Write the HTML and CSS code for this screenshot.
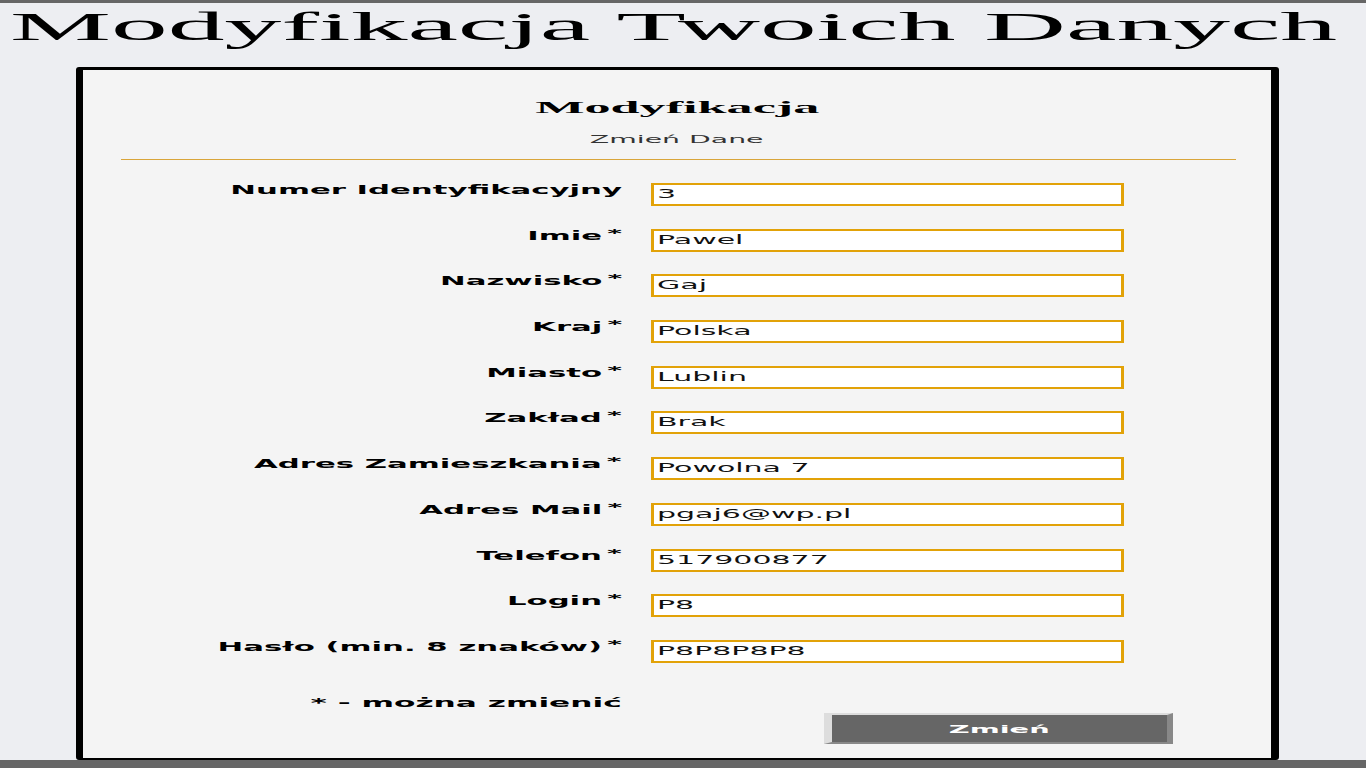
FILE: index.html
```html
<!DOCTYPE html>
<html lang="pl">
<head>
<meta charset="utf-8">
<title>Modyfikacja Twoich Danych</title>
<link rel="stylesheet" href="styles.css">
</head>
<body>
<div class="topbar"></div>
<h1 class="page-title"><span class="st st-title">Modyfikacja Twoich Danych</span></h1>
<main class="card">
  <h2 class="card-title"><span class="st st-head">Modyfikacja</span></h2>
  <p class="card-sub"><span class="st st-sub">Zmień Dane</span></p>
  <hr class="rule">
  <form class="form">
    <div class="lbl"><span class="st st-lbl">Numer Identyfikacyjny</span></div>
    <div class="field"><span class="st st-val">3</span></div>

    <div class="lbl"><span class="st st-lbl">Imie<sup class="ast">*</sup></span></div>
    <div class="field"><span class="st st-val">Pawel</span></div>

    <div class="lbl"><span class="st st-lbl">Nazwisko<sup class="ast">*</sup></span></div>
    <div class="field"><span class="st st-val">Gaj</span></div>

    <div class="lbl"><span class="st st-lbl">Kraj<sup class="ast">*</sup></span></div>
    <div class="field"><span class="st st-val">Polska</span></div>

    <div class="lbl"><span class="st st-lbl">Miasto<sup class="ast">*</sup></span></div>
    <div class="field"><span class="st st-val">Lublin</span></div>

    <div class="lbl"><span class="st st-lbl">Zakład<sup class="ast">*</sup></span></div>
    <div class="field"><span class="st st-val">Brak</span></div>

    <div class="lbl"><span class="st st-lbl">Adres Zamieszkania<sup class="ast">*</sup></span></div>
    <div class="field"><span class="st st-val">Powolna 7</span></div>

    <div class="lbl"><span class="st st-lbl">Adres Mail<sup class="ast">*</sup></span></div>
    <div class="field"><span class="st st-val">pgaj6@wp.pl</span></div>

    <div class="lbl"><span class="st st-lbl">Telefon<sup class="ast">*</sup></span></div>
    <div class="field"><span class="st st-val">517900877</span></div>

    <div class="lbl"><span class="st st-lbl">Login<sup class="ast">*</sup></span></div>
    <div class="field"><span class="st st-val">P8</span></div>

    <div class="lbl"><span class="st st-lbl">Hasło (min. 8 znaków)<sup class="ast">*</sup></span></div>
    <div class="field"><span class="st st-val">P8P8P8P8</span></div>
  </form>
  <div class="note"><span class="st st-note">* - można zmienić</span></div>
  <div class="actions">
    <button class="btn" type="button"><span class="st st-btn">Zmień</span></button>
  </div>
</main>
<div class="footbar"></div>
</body>
</html>
```

FILE: styles.css
```css
html, body {
  margin: 0;
  padding: 0;
}
body {
  background: #edeef2;
  height: 768px;
  overflow: hidden;
  font-family: "DejaVu Sans", Verdana, sans-serif;
  color: #000;
}
.st {
  display: inline-block;
  white-space: nowrap;
}
.topbar {
  height: 3px;
  background: #666666;
}
.page-title {
  margin: 0;
  padding-right: 18px;
  text-align: center;
  font-family: "Liberation Serif", "Times New Roman", serif;
  font-weight: normal;
  font-size: 41px;
  line-height: 46px;
  height: 46px;
}
.st-title {
  transform: scaleX(2.77);
  transform-origin: center;
}
.card {
  margin: 18px 0 0 76px;
  background: #f4f4f4;
  border-style: solid;
  border-color: #000;
  border-width: 3px 8px 2px 7px;
  border-radius: 3px;
  padding: 28px 0 0 0;
  box-sizing: border-box;
  width: 1203px;
  height: 693px;
}
.card-title {
  margin: 0;
  text-align: center;
  font-family: "Liberation Serif", "Times New Roman", serif;
  font-weight: bold;
  font-size: 17px;
  line-height: 20px;
}
.st-head {
  transform: scaleX(3.07);
  transform-origin: center;
}
.card-sub {
  margin: 16px 0 0 0;
  text-align: center;
  font-size: 10px;
  line-height: 12px;
  color: #333;
}
.st-sub {
  transform: scaleX(2.83);
  transform-origin: center;
}
.rule {
  margin: 13px 35px 0 38px;
  border: 0;
  border-top: 1px solid #d9a53a;
  height: 0;
}
.form {
  margin: 23px 0 0 0;
  display: grid;
  grid-template-columns: 539px 473px;
  column-gap: 29px;
  row-gap: 22.7px;
  grid-auto-rows: 23px;
}
.lbl {
  text-align: right;
  font-weight: bold;
  font-size: 12px;
  line-height: 14px;
}
.st-lbl {
  transform: scaleX(2.56);
  transform-origin: right center;
}
.ast {
  font-size: 11px;
  line-height: 1;
  vertical-align: top;
  margin-left: 2px;
  position: relative;
  top: -1px;
}
.field {
  box-sizing: border-box;
  height: 23px;
  background: #fff;
  border-style: solid;
  border-color: #e2a208;
  border-width: 2px 3px;
  padding-left: 3px;
  font-size: 12px;
  line-height: 19px;
  color: #111;
}
.st-val {
  transform: scaleX(2.5);
  transform-origin: left center;
}
.note {
  margin: 33px 0 0 0;
  width: 539px;
  text-align: right;
  font-weight: bold;
  font-size: 12px;
  line-height: 14px;
}
.st-note {
  transform: scaleX(2.6);
  transform-origin: right center;
}
.actions {
  margin: 3px 0 0 741px;
}
.btn {
  display: block;
  box-sizing: border-box;
  width: 349px;
  height: 31px;
  margin: 0;
  padding: 2px 0 0 0;
  background: #666666;
  border-style: solid;
  border-width: 2px 6px 2px 8px;
  border-color: #dddddd #888888 #888888 #dddddd;
  color: #fff;
  font-family: "DejaVu Sans", Verdana, sans-serif;
  font-weight: bold;
  font-size: 11px;
  line-height: 25px;
  text-align: center;
}
.st-btn {
  transform: scaleX(2.62);
  transform-origin: center;
}
.footbar {
  height: 8px;
  background: #666666;
}
```
